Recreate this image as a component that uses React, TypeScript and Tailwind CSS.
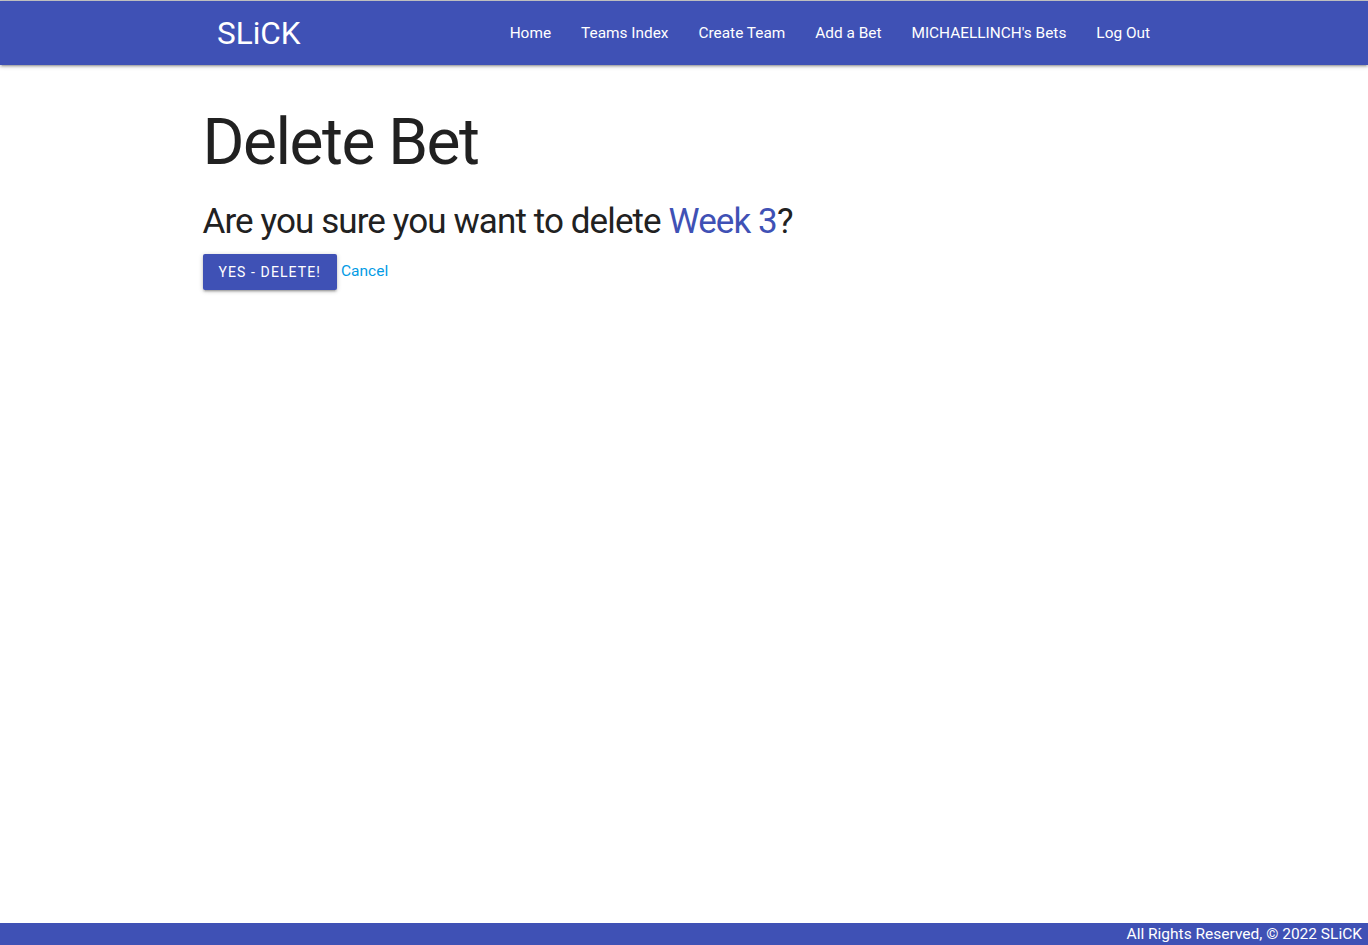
const navLinks = ['Home', 'Teams Index', 'Create Team', 'Add a Bet', "MICHAELLINCH's Bets", 'Log Out']

export default function App() {
  return (
    <div
      className="h-[945px] flex flex-col bg-white border-t border-[#c9c9c9] text-[#212121]"
      style={{ fontFamily: 'Roboto, "Liberation Sans", sans-serif' }}
    >
      {/* Navbar */}
      <nav className="h-16 shrink-0 bg-[#3f51b5] shadow-[0_2px_2px_0_rgba(0,0,0,0.14),0_3px_1px_-2px_rgba(0,0,0,0.12),0_1px_5px_0_rgba(0,0,0,0.2)] relative z-10">
        <div className="w-[962px] mx-auto h-full flex items-center justify-between">
          <a href="#" className="text-white text-[31.5px] leading-none pl-[14px] pt-[2px]">
            SLiCK
          </a>
          <ul className="flex items-center h-full">
            {navLinks.map((link) => (
              <li key={link}>
                <a href="#" className="block px-[15px] text-white text-[15.4px] leading-[67px]">
                  {link}
                </a>
              </li>
            ))}
          </ul>
        </div>
      </nav>

      {/* Content */}
      <main className="flex-1">
        <div className="w-[963px] mx-auto">
          <h1 className="text-[64px] tracking-[-1.5px] leading-[74px] mt-[41px] mb-[22px]">Delete Bet</h1>
          <h4 className="text-[35px] tracking-[-0.9px] leading-[40px] mb-[12px]">
            Are you sure you want to delete <span className="text-[#3f51b5]">Week 3</span>?
          </h4>
          <div className="flex items-start">
            <button className="h-9 px-[16px] bg-[#3f51b5] text-white text-[14px] uppercase tracking-[1.1px] rounded-[2px] shadow-[0_2px_2px_0_rgba(0,0,0,0.14),0_3px_1px_-2px_rgba(0,0,0,0.12),0_1px_5px_0_rgba(0,0,0,0.2)]">
              Yes - Delete!
            </button>
            <a href="#" className="ml-1 text-[#039be5] text-[15.5px] leading-[34px]">
              Cancel
            </a>
          </div>
        </div>
      </main>

      {/* Footer */}
      <footer className="h-[22px] shrink-0 bg-[#3f51b5] text-white text-[15.5px] leading-[22px] text-right pr-[6px]">
        All Rights Reserved, © 2022 SLiCK
      </footer>
    </div>
  )
}
